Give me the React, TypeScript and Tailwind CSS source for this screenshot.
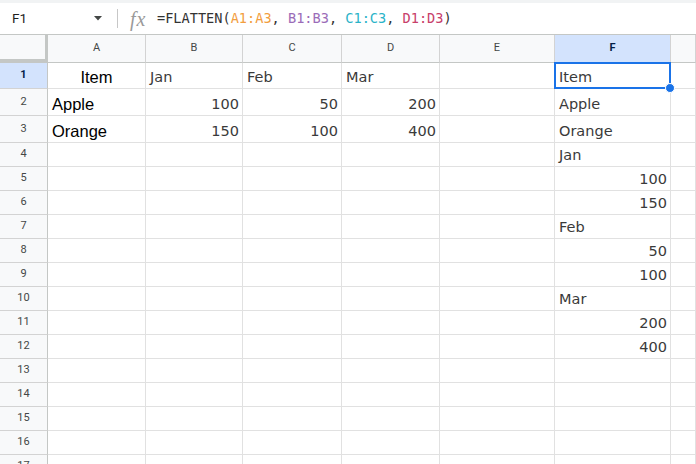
import React from "react";

type Kind = "c" | "a" | "l" | "r";
type Cell = { v?: string; k?: Kind };

const cols = ["A", "B", "C", "D", "E", "F", ""];

const rows: Cell[][] = [
  [{ v: "Item", k: "c" }, { v: "Jan", k: "l" }, { v: "Feb", k: "l" }, { v: "Mar", k: "l" }, {}, { v: "Item", k: "l" }, {}],
  [{ v: "Apple", k: "a" }, { v: "100", k: "r" }, { v: "50", k: "r" }, { v: "200", k: "r" }, {}, { v: "Apple", k: "l" }, {}],
  [{ v: "Orange", k: "a" }, { v: "150", k: "r" }, { v: "100", k: "r" }, { v: "400", k: "r" }, {}, { v: "Orange", k: "l" }, {}],
  [{}, {}, {}, {}, {}, { v: "Jan", k: "l" }, {}],
  [{}, {}, {}, {}, {}, { v: "100", k: "r" }, {}],
  [{}, {}, {}, {}, {}, { v: "150", k: "r" }, {}],
  [{}, {}, {}, {}, {}, { v: "Feb", k: "l" }, {}],
  [{}, {}, {}, {}, {}, { v: "50", k: "r" }, {}],
  [{}, {}, {}, {}, {}, { v: "100", k: "r" }, {}],
  [{}, {}, {}, {}, {}, { v: "Mar", k: "l" }, {}],
  [{}, {}, {}, {}, {}, { v: "200", k: "r" }, {}],
  [{}, {}, {}, {}, {}, { v: "400", k: "r" }, {}],
  [{}, {}, {}, {}, {}, {}, {}],
  [{}, {}, {}, {}, {}, {}, {}],
  [{}, {}, {}, {}, {}, {}, {}],
  [{}, {}, {}, {}, {}, {}, {}],
  [{}, {}, {}, {}, {}, {}, {}],
];

const kindClass: Record<Kind, string> = {
  c: "justify-center font-['Liberation_Sans',Arial,sans-serif] text-[16.5px] leading-[18px] text-black",
  a: "justify-start pl-[4px] font-['Liberation_Sans',Arial,sans-serif] text-[16.5px] leading-[18px] text-black",
  l: "justify-start pl-[4px] font-['DejaVu_Sans',Verdana,sans-serif] text-[14.5px] leading-[17px] text-[#3a3a3a]",
  r: "justify-end pr-[3px] font-['DejaVu_Sans',Verdana,sans-serif] text-[14.5px] leading-[17px] text-[#3a3a3a]",
};

function FormulaBar() {
  return (
    <div className="flex h-[32px] items-center border-b border-[#c4c7c5] bg-white">
      <div className="flex w-[117px] items-center justify-between pl-[12px] pr-[15px]">
        <span className="font-['Roboto',Arial,sans-serif] text-[13.5px] text-[#1f1f1f]">F1</span>
        <svg width="8" height="5" viewBox="0 0 8 5">
          <path d="M0 0h8L4 4.5z" fill="#444746" />
        </svg>
      </div>
      <div className="h-[19px] w-px bg-[#c7c7c7]" />
      <span className="ml-[12px] w-[27px] font-['Liberation_Serif',serif] text-[20px] italic leading-none tracking-[1px] text-[#9a9a9a]">
        fx
      </span>
      <span className="font-['DejaVu_Sans_Mono',monospace] text-[13.6px] text-[#333]">
        =FLATTEN(<span className="text-[#f29e3f]">A1:A3</span>,{" "}
        <span className="text-[#9b6cb8]">B1:B3</span>,{" "}
        <span className="text-[#2bb3c8]">C1:C3</span>,{" "}
        <span className="text-[#c8406a]">D1:D3</span>)
      </span>
    </div>
  );
}

export default function App() {
  return (
    <main className="h-[464px] w-[696px] overflow-hidden bg-white">
      <div className="h-[3px] bg-[#f1f3f4]" />
      <FormulaBar />

      <div className="grid grid-cols-[48px_98px_97px_99px_98px_115px_116px_1fr] grid-rows-[28px_26px_27px_27px_repeat(14,24px)]">
        {/* corner */}
        <div className="border-b-[4px] border-r-[3px] border-[#c4c7c5] bg-[#f8f9fa]" />
        {cols.map((c, i) => (
          <div
            key={i}
            className={
              c === "F"
                ? "flex items-center justify-center border-b border-r border-b-[#c4c7c5] border-r-[#d3d3d3] bg-[#d3e3fd] font-['Roboto',Arial,sans-serif] text-[11px] font-bold text-[#041e49]"
                : "flex items-center justify-center border-b border-r border-b-[#c4c7c5] border-r-[#d3d3d3] bg-[#f8f9fa] font-['Roboto',Arial,sans-serif] text-[11px] text-[#444746]"
            }
          >
            {c}
          </div>
        ))}

        {rows.map((row, ri) => (
          <React.Fragment key={ri}>
            <div
              className={
                ri === 0
                  ? "flex items-center justify-center border-b border-r border-b-[#d3d3d3] border-r-[#c4c7c5] bg-[#d3e3fd] font-['Roboto',Arial,sans-serif] text-[11px] font-bold text-[#041e49]"
                  : "flex items-center justify-center border-b border-r border-b-[#d3d3d3] border-r-[#c4c7c5] bg-[#f8f9fa] font-['Roboto',Arial,sans-serif] text-[11px] text-[#444746]"
              }
            >
              {ri + 1}
            </div>
            {row.map((cell, ci) => (
              <div
                key={ci}
                className={
                  (ri === 0 && ci === 5 ? "z-10 " : "") +
                  "relative flex items-end overflow-visible whitespace-nowrap border-b border-r border-[#e1e1e1] pb-[2px] " +
                  kindClass[cell.k ?? "l"]
                }
              >
                {cell.v}
                {ri === 0 && ci === 5 && (
                  <div className="pointer-events-none absolute -bottom-px -left-px -right-px -top-px border-2 border-[#1a73e8]">
                    <div className="absolute -bottom-[6px] -right-[6px] h-[10px] w-[10px] rounded-full border border-white bg-[#1a73e8]" />
                  </div>
                )}
              </div>
            ))}
          </React.Fragment>
        ))}
      </div>
    </main>
  );
}
